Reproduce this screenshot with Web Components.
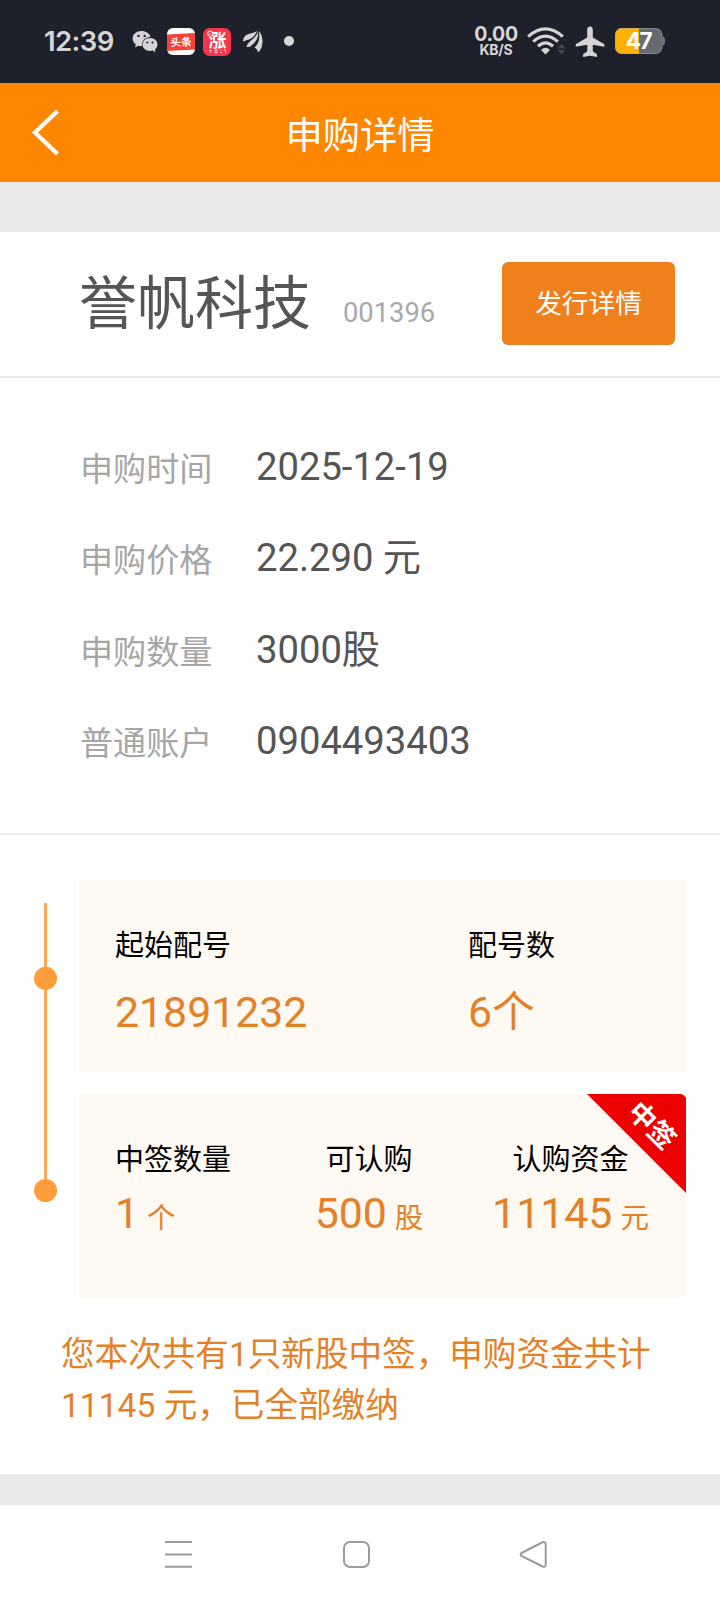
<!DOCTYPE html>
<html lang="zh-CN">
<head>
<meta charset="utf-8">
<title>申购详情</title>
<style>
html,body{margin:0;padding:0}
body{width:720px;height:1604px;overflow:hidden;background:#fff;font-family:Roboto,"Noto Sans CJK SC",sans-serif;color:#555}
</style>
</head>
<body>
<subscription-page></subscription-page>
<script>
function define(name, html) {
  const t = document.createElement('template');
  t.innerHTML = html;
  customElements.define(name, class extends HTMLElement {
    constructor() {
      super();
      this.attachShadow({ mode: 'open' }).appendChild(t.content.cloneNode(true));
    }
  });
}

define('status-bar', `
<style>
:host{display:flex;height:83px;background:#1e212c;color:#d6d6d6;font-family:Inter,sans-serif;box-sizing:border-box;padding:0 55px 0 44px;align-items:flex-start}
svg{display:block;flex:none}
.time{font:600 27.5px/30px Inter,sans-serif;margin-top:26px;width:88px;white-space:nowrap;letter-spacing:-.6px}
.sp{flex:1}
.net{display:flex;flex-direction:column;align-items:center;width:46px;margin:26px 8px 0 0;white-space:nowrap}
.net b{font-weight:700;font-size:19.5px;line-height:17px;letter-spacing:-.3px}
.net i{font-style:normal;font-weight:700;font-size:14px;line-height:14px;letter-spacing:-.2px}
</style>
<span class="time">12:39</span>
<svg width="27" height="24" viewBox="0 0 27 24" style="margin-top:30px">
 <path fill="#d4d4d4" fill-rule="evenodd" d="M9.5 1C4.4 1 .6 4.200.6 8.500c0 2.400 1.200 4.500 3.200 5.900L3 17.500l3.500-1.700c1 .3 2 .4 3 .4l.6-.1c-1-5 3.200-9.300 8.400-9.200C17.500 3.400 14 1 9.500 1zM6.500 4.700a1.200 1.200 0 110 2.400 1.200 1.200 0 010-2.400zm6.200 0a1.200 1.200 0 110 2.400 1.200 1.200 0 010-2.400z"/>
 <path fill="#d4d4d4" fill-rule="evenodd" d="M18 8c-4.300 0-7.500 2.900-7.500 6.500s3.200 6.500 7.500 6.500c.9 0 1.800-.1 2.600-.4l3 1.600-.7-2.800c1.600-1.200 2.600-2.900 2.600-4.900C25.500 10.900 22.300 8 18 8zm-2.700 3.500a1 1 0 110 2 1 1 0 010-2zm5.200 0a1 1 0 110 2 1 1 0 010-2z"/>
</svg>
<svg width="28" height="28" viewBox="0 0 28 28" style="margin:28px 0 0 8px">
 <defs><clipPath id="r"><rect width="28" height="27" rx="6"/></clipPath></defs>
 <g clip-path="url(#r)"><rect width="28" height="27" fill="#fff"/><path d="M0 6.500L28 5V21.500L0 23z" fill="#f34238"/></g>
 <text x="14" y="18" text-anchor="middle" font-family="Noto Sans CJK SC,sans-serif" font-weight="700" font-size="10.500" fill="#fff" transform="rotate(-3 14 14)">头条</text>
</svg>
<svg width="28" height="28" viewBox="0 0 28 28" style="margin:28px 0 0 8px;overflow:visible">
 <rect width="28" height="28" rx="6.500" fill="#f2354a"/>
 <text x="14.500" y="19" text-anchor="middle" font-family="Noto Sans CJK SC,sans-serif" font-weight="700" font-size="18" fill="#fff">涨</text>
 <circle cx="7.300" cy="5.700" r="2.600" fill="#f2354a" stroke="#fff" stroke-width="1"/><path d="M6 7l2.600-2.600" stroke="#fff" stroke-width=".8"/>
 <path d="M6 22.500h3M7.500 22.500v2.500M12 22h2v3h-2zM17.500 22h1M17 24.500h2M21 22h1.500v3" stroke="#fff" stroke-width=".8" fill="none" opacity=".85"/>
</svg>
<svg width="22" height="24" viewBox="0 0 22 24" style="margin:30px 0 0 11px">
 <g fill="#d4d4d4"><path d="M15 1C9.500 4.500 1 3.200 1 11.500 6 10 12.500 8.500 15 1z"/><path d="M16 1.500C14.500 8.500 6 10.500 4.500 17c2.500.5 4.200-.8 5.500-2C14 11.500 17 7.500 16 1.500z"/><path d="M16.800 1c3.700 3.500 4.700 11 2.700 16.500-.8 2.300-2.200 4-3.500 5-.2-2.200-1.500-4-3.500-5C17 13.500 18.300 7.500 16.800 1z"/></g>
</svg>
<svg width="10" height="10" viewBox="0 0 10 10" style="margin:36px 0 0 20px"><circle cx="5" cy="5" r="5" fill="#d8d8d8"/></svg>
<span class="sp"></span>
<div class="net"><b>0.00</b><i>KB/S</i></div>
<svg width="39" height="28" viewBox="0 0 39 28" style="margin:27px 9px 0 0">
 <g fill="none" stroke="#d4d4d4" stroke-width="3.200"><path d="M1.200 9.600Q18.500-5.800 35.800 9.600"/><path d="M6.200 14.600Q18.500 3.500 30.800 14.600"/><path d="M11 19.300Q18.500 12.500 26 19.300"/></g>
 <path fill="#d4d4d4" d="M14 23q4.500-4.500 9 0l-4.500 4.600z"/>
 <path fill="#454852" d="M34.500 16.500l4 5h-8zM34.500 27.500l4-4.500h-8z"/>
</svg>
<svg width="30" height="32" viewBox="0 0 30 32" style="margin:26px 10px 0 0">
 <path fill="#d4d4d4" d="M15 .4c1.800 0 2.800 1.600 2.800 3.400v7.600l10.800 6.300c.5.300.8.800.8 1.400v1.700l-11.600-2v6.500l4.200 3v2.600L15 29.800l-6.900 1.100v-2.600l4.200-3v-6.500l-11.600 2v-1.700c0-.6.3-1.100.8-1.400l10.700-6.300V3.800C12.200 2 13.200.4 15 .4z"/>
</svg>
<svg width="50" height="27" viewBox="0 0 50 27" style="margin:28px 0 0 0">
 <defs><clipPath id="b"><rect y="0" width="47.500" height="26" rx="7"/></clipPath></defs>
 <g clip-path="url(#b)"><rect width="48" height="26" fill="#666a71"/><rect width="24" height="26" fill="#ffb000"/></g>
 <rect x=".5" y=".5" width="46.500" height="25" rx="6.500" fill="none" stroke="#a6a8a8" stroke-opacity=".5"/>
 <path d="M48 8.500q2 .8 2 4.500t-2 4.500z" fill="#7b7e83"/>
 <text x="23.500" y="21" text-anchor="middle" font-family="Inter,sans-serif" font-weight="700" font-size="22.500" letter-spacing="-1.300" fill="#fff">47</text>
</svg>`);

define('nav-header', `
<style>
:host{display:grid;grid-template-columns:92px 1fr 92px;height:99px;background:#ff8600;color:#fff;align-items:center}
svg{display:block;margin:-2px 0 0 31px}
h1{margin:6px 0 0;font-size:37.300px;line-height:48px;font-weight:400;text-align:center;white-space:nowrap}
</style>
<svg width="30" height="48" viewBox="0 0 30 48"><path d="M26.500 3L4 24.500L26.500 46" fill="none" stroke="#fff" stroke-width="4.200"/></svg>
<h1><slot></slot></h1><span></span>`);

define('section-gap', `<style>:host{display:block;background:#eaeaea}</style>`);

define('stock-title', `
<style>
:host{display:flex;height:144px;border-bottom:2px solid #eaeaea;padding:0 45px 0 79px;align-items:flex-start}
.name{font-size:58px;line-height:70px;margin-top:37px;color:#555;white-space:nowrap}
.code{font-size:27.300px;line-height:32px;margin:65px 0 0 32px;color:#a9a9a9;flex:1}
button{font:400 26.700px/32px Roboto,"Noto Sans CJK SC",sans-serif;border:0;margin:30px 0 0;padding:1px 0 0;width:173px;height:83px;border-radius:6px;background:#ef801b;color:#fff;white-space:nowrap}
</style>
<span class="name"><slot name="name"></slot></span><span class="code"><slot name="code"></slot></span>
<button><slot name="action"></slot></button>`);

define('info-row', `
<style>
:host{display:flex;height:91.300px;align-items:center;white-space:nowrap}
.l{font-size:33.100px;line-height:40px;width:176px;padding-top:6px;color:#a6a6a6}
.v{font-size:38.200px;line-height:46px;color:#555}
</style><span class="l"><slot name="label"></slot></span><span class="v"><slot></slot></span>`);

define('info-list', `
<style>:host{display:block;box-sizing:border-box;height:457px;padding:43.500px 0 0 80px;border-bottom:2px solid #eaeaea}</style><slot></slot>`);

define('step-line', `
<style>:host{display:block;width:24px}svg{display:block}</style>
<svg width="24" height="324" viewBox="0 0 24 324"><path d="M12.500 23V311" stroke="#f9a447" stroke-width="2.800"/><g fill="#ff9c3b"><circle cx="12.500" cy="98.300" r="11.500"/><circle cx="12.500" cy="310.500" r="11.500"/></g></svg>`);

define('data-cell', `
<style>
:host{display:flex;flex-direction:column;white-space:nowrap}
.l{font-size:29px;line-height:36px;color:#000}
.v{font-size:42.800px;line-height:50px;color:#e48127;margin-top:var(--gap,23px)}
::slotted([slot=unit]){font-size:28.500px;margin-left:8px}
</style><span class="l"><slot name="label"></slot></span><span class="v"><slot></slot><slot name="unit"></slot></span>`);

define('win-ribbon', `
<style>:host{display:block;position:absolute;top:0;right:0}svg{display:block}</style>
<svg width="99" height="99" viewBox="0 0 99 99"><path d="M0 0H94Q97 .5 99 4V99z" fill="#ed0000"/>
<text x="65" y="41" text-anchor="middle" transform="rotate(45 65 31.500)" font-family="Noto Sans CJK SC,sans-serif" font-weight="700" font-size="27" fill="#fff">中签</text></svg>`);

define('data-card', `
<style>
:host{display:grid;flex:none;position:relative;box-sizing:border-box;background:#fef9f3;padding:48px 0 0 36px;align-content:start}
:host(.a){height:192px;grid-template-columns:353px 1fr}
:host(.b){height:203px;grid-template-columns:154px 200px 203px}
</style><slot></slot>`);

define('allotment-panel', `
<style>
:host{display:flex;height:417px;box-sizing:border-box;padding:45px 34px 0 33px}
.cards{display:flex;flex-direction:column;gap:22px;width:607px;margin-left:22px}
.b data-cell{--gap:10px}
.c{align-items:center}
</style>
<step-line></step-line>
<div class="cards">
<data-card class="a"><data-cell><span slot="label">起始配号</span>21891232</data-cell><data-cell><span slot="label">配号数</span>6个</data-cell></data-card>
<data-card class="b"><data-cell><span slot="label">中签数量</span>1<span slot="unit">个</span></data-cell><data-cell class="c"><span slot="label">可认购</span>500<span slot="unit">股</span></data-cell><data-cell class="c"><span slot="label">认购资金</span>11145<span slot="unit">元</span></data-cell><win-ribbon></win-ribbon></data-card>
</div>`);

define('result-note', `
<style>:host{display:block;box-sizing:border-box;height:222px;padding:77px 0 0 61px;font-size:33.600px;line-height:51px;color:#e48127;white-space:nowrap}</style><slot></slot>`);

define('system-nav', `
<style>:host{display:flex;justify-content:space-between;height:99px;box-sizing:border-box;padding:35px 172px 0 164px}svg{display:block}</style>
<svg width="29" height="29" viewBox="0 0 29 29" fill="none" stroke="#9b9b9b" stroke-width="2"><path d="M1 2H28M1 14.500H28M1 26.700H28"/></svg>
<svg width="29" height="29" viewBox="0 0 29 29" fill="none" stroke="#9b9b9b" stroke-width="2"><rect x="2" y="2" width="25" height="25" rx="6"/></svg>
<svg width="29" height="29" viewBox="0 0 29 29" fill="none" stroke="#9b9b9b" stroke-width="2"><path d="M2.500 13L23.500 2.300Q26.500 1.300 26.700 4.300V24.700Q26.500 27.700 23.500 26.500L2.500 15.900Q.8 14.500 2.500 13z"/></svg>`);

define('subscription-page', `
<style>:host{display:flex;flex-direction:column;width:720px;height:1604px;background:#fff}.g1{height:50px}.g2{height:31px}:host>*{flex:none}</style>
<status-bar></status-bar>
<nav-header>申购详情</nav-header>
<section-gap class="g1"></section-gap>
<stock-title><span slot="name">誉帆科技</span><span slot="code">001396</span><span slot="action">发行详情</span></stock-title>
<info-list>
<info-row><span slot="label">申购时间</span>2025-12-19</info-row>
<info-row><span slot="label">申购价格</span>22.290 元</info-row>
<info-row><span slot="label">申购数量</span>3000股</info-row>
<info-row><span slot="label">普通账户</span>0904493403</info-row>
</info-list>
<allotment-panel></allotment-panel>
<result-note>您本次共有1只新股中签，申购资金共计<br>11145 元，已全部缴纳</result-note>
<section-gap class="g2"></section-gap>
<system-nav></system-nav>`);
</script>
</body>
</html>
